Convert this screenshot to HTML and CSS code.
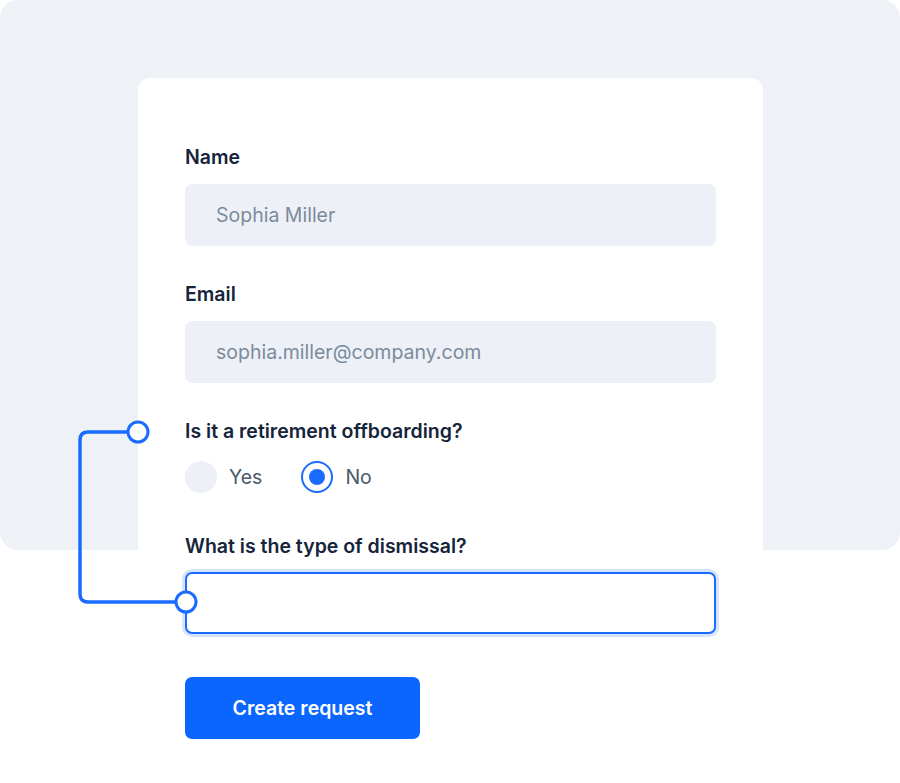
FILE: index.html
```html
<!DOCTYPE html>
<html lang="en">
<head>
<meta charset="utf-8">
<title>Offboarding request</title>
<link rel="stylesheet" href="styles.css">
</head>
<body>
<div class="stage">
  <div class="panel">
    <form class="card">
      <div class="field">
        <label class="label">Name</label>
        <div class="input">Sophia Miller</div>
      </div>
      <div class="field">
        <label class="label">Email</label>
        <div class="input">sophia.miller@company.com</div>
      </div>
      <div class="field field-radio">
        <label class="label">Is it a retirement offboarding?</label>
        <div class="radios">
          <span class="radio"><span class="dot"></span>Yes</span>
          <span class="radio checked"><span class="dot"></span>No</span>
        </div>
      </div>
      <div class="field field-last">
        <label class="label">What is the type of dismissal?</label>
        <div class="input focused"></div>
      </div>
      <button type="button" class="btn">Create request</button>
    </form>
  </div>
  <svg class="connector" width="900" height="783" viewBox="0 0 900 783">
    <path d="M138 432 H88 Q80 432 80 440 V594 Q80 602 88 602 H186" fill="none" stroke="#1a6bff" stroke-width="3.5"/>
    <circle cx="138" cy="432" r="10" fill="#fff" stroke="#1a6bff" stroke-width="3"/>
    <circle cx="186" cy="602" r="10" fill="#fff" stroke="#1a6bff" stroke-width="3"/>
  </svg>
</div>
</body>
</html>
```
FILE: styles.css
```css
* { box-sizing: border-box; }
html, body { margin: 0; padding: 0; background: #ffffff; }
body { font-family: Inter, "Noto Sans", sans-serif; width: 900px; height: 783px; overflow: hidden; }
.stage { position: relative; width: 900px; height: 783px; }
.panel {
  height: 550px;
  background: #eef2f7;
  border-radius: 18px;
  padding: 78px 0 0 138px;
}
.card {
  width: 625px;
  background: #ffffff;
  border-radius: 12px;
  padding: 67px 47px 60px;
  display: flex;
  flex-direction: column;
}
.field { display: flex; flex-direction: column; margin-bottom: 36px; }
.label {
  font-size: 19.5px;
  line-height: 24px;
  font-weight: 600;
  color: #15243a;
  margin-bottom: 15px;
}
.input {
  height: 62px;
  border-radius: 7px;
  background: #edf0f7;
  padding-left: 31px;
  display: flex;
  align-items: center;
  font-size: 19.5px;
  color: #7b8b9b;
}
.input.focused {
  background: #ffffff;
  border: 2px solid #1a6bff;
  box-shadow: 0 0 0 3px #d6e4fd;
}
.field-radio { margin-bottom: 41px; }
.field-radio .label { margin-bottom: 18px; }
.radios { display: flex; gap: 39px; height: 32px; }
.radio {
  display: flex;
  align-items: center;
  gap: 12px;
  font-size: 19.5px;
  color: #4a5a6a;
}
.dot {
  width: 32px;
  height: 32px;
  border-radius: 50%;
  background: #edf0f7;
  display: flex;
  align-items: center;
  justify-content: center;
}
.radio.checked .dot {
  background: #ffffff;
  border: 2px solid #1a6bff;
}
.radio.checked .dot::after {
  content: "";
  width: 16px;
  height: 16px;
  border-radius: 50%;
  background: #1a6bff;
}
.field-last { margin-bottom: 43px; }
.field-last .label { margin-bottom: 14px; }
.btn {
  align-self: flex-start;
  width: 235px;
  height: 62px;
  border: 0;
  border-radius: 7px;
  background: #0b66ff;
  color: #ffffff;
  font-family: Inter, "Noto Sans", sans-serif;
  font-size: 19.5px;
  font-weight: 600;
}
.connector { position: absolute; left: 0; top: 0; pointer-events: none; }
```
